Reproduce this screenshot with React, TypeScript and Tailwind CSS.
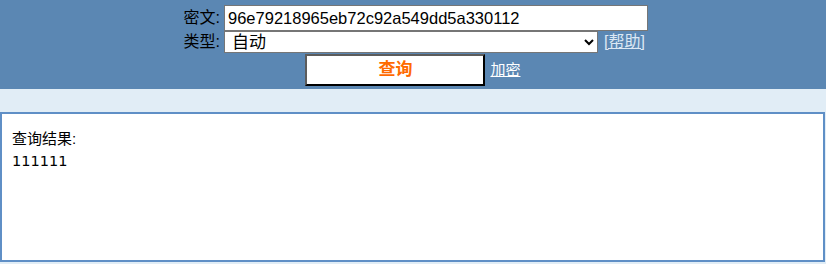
import { useState } from 'react'

export default function App() {
  const [cipher, setCipher] = useState('96e79218965eb72c92a549dd5a330112')
  const [type, setType] = useState('auto')

  return (
    <div className="w-[826px] h-[264px] bg-[#e1edf6] text-black" style={{ fontFamily: '"Liberation Sans", "Noto Sans CJK SC", sans-serif' }}>
      {/* header form */}
      <div className="h-[89px] bg-[#5b87b3] pt-[5px]">
        <div className="grid grid-cols-[42px_424px] justify-center gap-x-[4px] items-center">
          <label className="text-[16px] text-right leading-none">密文:</label>
          <input
            value={cipher}
            onChange={(e) => setCipher(e.target.value)}
            className="h-[26px] w-[424px] bg-white border border-[#767676] px-[3px] text-[16.5px] outline-none"
          />
          <label className="text-[16px] text-right leading-none">类型:</label>
          <div className="flex items-center gap-[6px] h-[22px]">
            <select
              value={type}
              onChange={(e) => setType(e.target.value)}
              className="h-[22px] w-[374px] bg-white border border-[#767676] text-[17px] pl-[3px] outline-none"
            >
              <option value="auto">自动</option>
              <option value="md5">md5</option>
            </select>
            <a href="#" className="text-[16px] text-[#dce8f4] underline">[帮助]</a>
          </div>
          <div className="col-span-2 flex justify-center items-center gap-[5px] pt-px">
            <button className="w-[180px] h-[32px] bg-white border-2 border-t-[#5c5c5c] border-l-[#5c5c5c] border-b-black border-r-black text-[#ff6a00] text-[17px] font-bold">
              查询
            </button>
            <a href="#" className="text-[15px] text-white underline">加密</a>
          </div>
        </div>
      </div>

      {/* result */}
      <div className="mt-[23px] h-[150px] w-[825px] bg-white border-2 border-[#5f8fc6] px-[10px] pt-[14px]">
        <div className="leading-[22px] text-[15px]">查询结果:</div>
        <div className="leading-[22px] text-[14.5px]" style={{ fontFamily: '"DejaVu Sans", sans-serif' }}>111111</div>
      </div>
    </div>
  )
}
